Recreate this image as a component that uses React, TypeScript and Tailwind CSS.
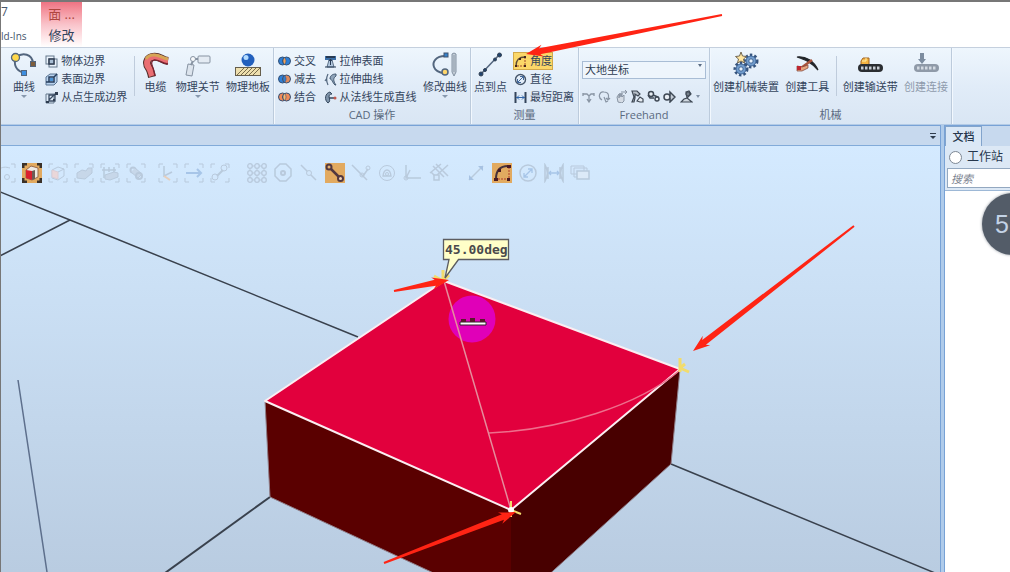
import type { ReactNode } from "react";

const FONT = "font-['Open_Sans','Noto_Sans_CJK_SC',sans-serif]";

function Svg({ w, h, children }: { w: number; h: number; children: ReactNode }) {
  return (
    <svg width={w} height={h} viewBox={`0 0 ${w} ${h}`} fill="none" aria-hidden="true" className="shrink-0">
      {children}
    </svg>
  );
}

/* ---------- ribbon icons ---------- */

const CurveIcon = () => (
  <Svg w={28} h={26}>
    <path d="M6 5C13 0 22 2 23 11M5 8c-1 7 3 12 10 13" stroke="#53667e" strokeWidth="2" />
    <circle cx="5.500" cy="5.500" r="4" fill="#ffd84a" stroke="#53667e" strokeWidth="1.300" />
    <rect x="20.500" y="9.500" width="5" height="5" fill="#7d5e3d" stroke="#53667e" />
    <rect x="11.500" y="18.500" width="5" height="5" fill="#3d8ee0" stroke="#53667e" />
  </Svg>
);

const CableIcon = () => (
  <Svg w={28} h={26}>
    <path d="M26 9C19 8 17 3 10 5 4 7 4 12 7 16c2 3 2 5 3 9" stroke="#54302c" strokeWidth="8" />
    <path d="M26 9C19 8 17 3 10 5 4 7 4 12 7 16c2 3 2 5 3 8" stroke="#ea6e72" strokeWidth="6" />
    <path d="M26 7C19 6 17 2 11 3 8 3 6 4 4 7" stroke="#d6a556" strokeWidth="3" />
    <path d="M26 12C19 11 16 7 12 8c-4 2-2 5-1 8l2 8" stroke="#7b2230" strokeWidth="1.300" />
  </Svg>
);

const JointIcon = () => (
  <Svg w={28} h={26}>
    <rect x="14" y="4" width="12" height="7" rx="1" fill="#e4ebf3" stroke="#8793a2" />
    <path d="M4 12l6 1-2 11-6-1z" fill="#dce4ed" stroke="#8793a2" />
    <path d="M7 13l3-6h4" stroke="#8793a2" strokeWidth="2" />
    <circle cx="9" cy="7" r="2.500" fill="#f8fafc" stroke="#8793a2" />
  </Svg>
);

const FloorIcon = () => (
  <Svg w={28} h={26}>
    <circle cx="14" cy="8" r="6.500" fill="#2360bd" />
    <circle cx="12" cy="5.500" r="2.500" fill="#b4dcff" />
    <rect x="1.500" y="15.500" width="25" height="8" fill="#eedfae" stroke="#665e4c" />
    <path d="M3 23l7-7M7 23l7-7M11 23l7-7M15 23l7-7M19 23l7-7" stroke="#776b4c" />
  </Svg>
);

const BodyEdgeIcon = () => (
  <Svg w={13} h={13}>
    <rect x="1" y="1" width="8" height="8" stroke="#65788c" />
    <rect x="4" y="4" width="8" height="8" stroke="#65788c" />
    <rect x="4" y="4" width="5" height="5" fill="#a9bfd5" stroke="#2f3d50" strokeWidth="1.500" />
  </Svg>
);

const FaceEdgeIcon = () => (
  <Svg w={13} h={13}>
    <path d="M1 4l4-3h7v8l-3 3H1z" fill="#b8d2ee" stroke="#587391" />
    <path d="M4 4h5v5H4zM9 4l3-3M1 9h3" stroke="#253d5c" strokeWidth="1.500" />
    <path d="M5 5h3v3H5z" fill="#4b92d5" />
  </Svg>
);

const PointsEdgeIcon = () => (
  <Svg w={13} h={13}>
    <path d="M1 3h8v9H1z" stroke="#65788c" />
    <path d="M4 9l5-5 2-2M4 4v6h6V4z" stroke="#3c4e65" strokeWidth="1.300" />
    <path d="M1 10h3v2H1zM10 1h3v3h-3zM8 8h2v2H8z" fill="#2f3d50" />
  </Svg>
);

function BooleanIcon({ left, right, mid }: { left: string; right: string; mid: string }) {
  return (
    <Svg w={13} h={11}>
      <circle cx="4.500" cy="5" r="4" fill={left} stroke="#345074" />
      <circle cx="8.500" cy="5" r="4" fill={right} stroke="#345074" />
      <path d="M6.500 1.500c2 2 2 5 0 7c-2-2-2-5 0-7z" fill={mid} stroke="#345074" strokeWidth=".6" />
    </Svg>
  );
}

const ExtrudeFaceIcon = () => (
  <Svg w={13} h={13}>
    <path d="M1 1h11v4H1z" fill="#3a6ea7" />
    <path d="M2 2h9" stroke="#263a54" strokeWidth="2" />
    <path d="M3 12l2-7h3l2 7z" fill="#b4c9e0" stroke="#5c7188" />
    <path d="M6.500 10V4M5 6l1.500-2L8 6M1 12h11" stroke="#263a54" />
  </Svg>
);

const ExtrudeCurveIcon = () => (
  <Svg w={13} h={13}>
    <path d="M4 1c-2 4-2 7 0 11M1 8l2-3" stroke="#53677e" strokeWidth="1.200" />
    <path d="M12 1C8 1 6 3 6 6c2 0 2 3 5 6h1C9 8 9 5 12 3z" fill="#8fa4ba" stroke="#445a72" />
  </Svg>
);

const NormalLineIcon = () => (
  <Svg w={13} h={13}>
    <path d="M6 1C1 2 0 9 4 12c2-1 2-3 1-6 0-2 1-3 3-3z" fill="#7f94aa" stroke="#36495f" />
    <path d="M5 7h6" stroke="#36495f" strokeWidth="1.500" />
    <circle cx="11" cy="7" r="1.500" fill="#c05a50" />
  </Svg>
);

const EditCurveIcon = () => (
  <Svg w={28} h={26}>
    <path d="M14 4C5 4 1 10 3 15c1 3 5 6 10 6" stroke="#53667e" strokeWidth="2" />
    <rect x="13" y="1" width="4" height="4" fill="#3681ca" stroke="#40536c" />
    <circle cx="14" cy="20" r="3" fill="#ffd66b" stroke="#53667e" strokeWidth="1.500" />
    <path d="M21 2q2-2 4 0v18l-2 4-2-4z" fill="#c4ced8" stroke="#8492a2" />
    <path d="M23 3v17" stroke="#8b99a8" />
  </Svg>
);

const PointToPointIcon = () => (
  <Svg w={28} h={26}>
    <path d="M4 22L22 3" stroke="#53667e" strokeWidth="1.500" />
    <g fill="#21446f" stroke="#334154">
      <circle cx="4" cy="22" r="2" />
      <circle cx="8" cy="18" r="1.500" />
      <circle cx="18" cy="7.500" r="1.500" />
      <circle cx="22.500" cy="3" r="2" />
    </g>
  </Svg>
);

const AngleIcon = () => (
  <Svg w={13} h={13}>
    <path d="M2 11C2 5 5 2 11 2" stroke="#5d4a35" strokeWidth="1.300" />
    <path d="M11 2v9H2" stroke="#a34a2c" strokeDasharray="2 1" />
    <path d="M10 1h2v2h-2zM1 10h2v2H1zM10 10h2v2h-2zM5 3h2v2H5z" fill="#42261e" />
  </Svg>
);

const DiameterIcon = () => (
  <Svg w={13} h={13}>
    <circle cx="6.500" cy="6.500" r="5" stroke="#46566a" strokeWidth="1.400" />
    <path d="M3.500 9.500l6-6M6 3.500h3.500V7M3.500 6v3.500H7" stroke="#426799" />
  </Svg>
);

const DistanceIcon = () => (
  <Svg w={13} h={13}>
    <path d="M1.500 1v11M11.500 1v11" stroke="#34445a" strokeWidth="2" />
    <path d="M2 6.500h9M5 4.500l-2 2 2 2M8 4.500l2 2-2 2" stroke="#3266a8" />
  </Svg>
);

function Gear({ x, y, r }: { x: number; y: number; r: number }) {
  return (
    <g transform={`translate(${x} ${y})`}>
      <circle r={r} stroke="#36547d" strokeWidth="3" strokeDasharray="2.400 2" />
      <circle r={r - 1} fill="#729dcd" stroke="#3e6597" />
      <circle r="2.200" fill="#e9f3fc" stroke="#3e6597" />
    </g>
  );
}

const MechanismIcon = () => (
  <Svg w={28} h={26}>
    <Gear x={19} y={9} r={6} />
    <Gear x={9} y={17} r={6} />
    <path d="M9 0l1.500 4 4 .5-3 2.500 1 4L9 9l-3.500 2 1-4-3-2.500 4-.5z" fill="#ffe6a1" stroke="#716651" />
  </Svg>
);

const ToolIcon = () => (
  <Svg w={28} h={26}>
    <path d="M4 5C13 4 21 9 25 18 18 10 13 8 4 5z" fill="#1f2227" stroke="#25282c" strokeWidth="1.200" />
    <path d="M19 8L8 16" stroke="#a8543d" strokeWidth="2.500" />
    <path d="M4 14l5 1 6-2v3l-6 3H4z" fill="#e4a37d" stroke="#7e3c31" strokeWidth=".7" />
    <path d="M4 14h4v4H4z" fill="#be2630" />
  </Svg>
);

const ConveyorIcon = () => (
  <Svg w={28} h={26}>
    <path d="M5 9l2-3h6v8H5z" fill="#f6b441" stroke="#a36623" />
    <path d="M6 9h4V6" stroke="#fff0ab" />
    <rect x="2" y="12" width="25" height="8" rx="4" fill="#2a2d31" />
    <path d="M5 16h19" stroke="#c8cdd3" strokeWidth="3" strokeDasharray="2.500 1.500" />
  </Svg>
);

const ConnectionIcon = () => (
  <Svg w={28} h={26}>
    <rect x="2" y="12" width="25" height="8" rx="4" fill="#8f9aa8" />
    <path d="M5 16h19" stroke="#d3dae2" strokeWidth="3" strokeDasharray="2.500 1.500" />
    <path d="M8 1h4v6h2l-4 5-4-5h2z" fill="#7d8da0" />
  </Svg>
);

const freehand: { name: string; icon: ReactNode }[] = [
  {
    name: "Move",
    icon: <path d="M1 4h4l2 2 2-2h3M1 3v3M12 3v3M7 6v5M5 9l2 3 2-3" stroke="#8995a4" strokeWidth="1.300" />,
  },
  {
    name: "Rotate",
    icon: <path d="M4 10C-1 7 2 1 6 2c5 0 5 4 4 7M10 10L8 8M10 10l2-2M6 7l2 5 2-1" stroke="#8995a4" strokeWidth="1.200" />,
  },
  {
    name: "Drag",
    icon: <path d="M3 12L2 7l2-3v4l1-5 1 4 1-4v4l2-2v6l-2 2zM6 2h6M10 0l2 2-2 2" fill="#d5dce5" stroke="#8995a4" />,
  },
  {
    name: "Jog joint",
    icon: (
      <g stroke="#3f4955" strokeWidth="1.200">
        <path d="M1 1h5l3 3-2 2-3-2v4l-1 4H1l2-5z" fill="#b8c1ca" />
        <path d="M6 11l3-4 3 2v3H9z" fill="#e8edf3" />
      </g>
    ),
  },
  {
    name: "Jog linear",
    icon: (
      <g stroke="#3f4955" strokeWidth="1.500">
        <circle cx="4" cy="4" r="2.500" fill="#e8edf3" />
        <path d="M6 5l5 2v3M1 5l2 3h4" />
        <circle cx="10" cy="9" r="2" fill="#e8edf3" />
      </g>
    ),
  },
  {
    name: "Jog reorient",
    icon: (
      <g stroke="#3f4955" strokeWidth="1.500">
        <path d="M5 5h2V2l5 5-5 5V9H5z" fill="#c3ccd6" />
        <circle cx="4" cy="7" r="3" fill="#e8edf3" />
      </g>
    ),
  },
  {
    name: "Multiple robot jog",
    icon: (
      <g stroke="#3f4955" strokeWidth="1.200">
        <path d="M6 2l3-1 2 3-4 4 5 4H1l3-3 3-1z" fill="#d0d8e0" />
        <circle cx="8" cy="4" r="2" fill="#76818c" />
      </g>
    ),
  },
];

/* ---------- ribbon parts ---------- */

function BigButton({ icon, label, menu, muted }: { icon: ReactNode; label: string; menu?: boolean; muted?: boolean }) {
  return (
    <button
      type="button"
      className={`flex shrink-0 flex-col items-center text-[11px] leading-[14px] whitespace-nowrap ${muted ? "text-[#8e9aab]" : "text-[#33445c]"}`}
    >
      <span className="mb-[2px] flex h-[26px]">{icon}</span>
      <span>{label}</span>
      {menu && <span className="mt-px border-x-[3px] border-t-[3px] border-x-transparent border-t-[#8798ad]" />}
    </button>
  );
}

function SmallButton({ icon, label, active }: { icon: ReactNode; label: string; active?: boolean }) {
  return (
    <button
      type="button"
      className={`flex h-[18px] items-center gap-[3px] px-px text-[11px] leading-[14px] whitespace-nowrap text-[#33445c] ${
        active ? "bg-[#fbd768] outline outline-1 -outline-offset-1 outline-[#d2a84a]" : ""
      }`}
    >
      {icon}
      {label}
    </button>
  );
}

function Group({ label, className, children }: { label: string; className: string; children: ReactNode }) {
  return (
    <section className={`flex shrink-0 flex-col border-r border-[#bccbdc] shadow-[1px_0_0_#f2f8fe] ${className}`}>
      <div className="flex flex-1 items-start justify-between px-[3px] pt-1">{children}</div>
      <h2 className="h-4 text-center text-[11px] leading-[14px] text-[#5a6a80]">{label}</h2>
    </section>
  );
}

const Divider = () => <span className="mt-1 h-10 w-px bg-[#bfccdc]" />;

function Ribbon() {
  return (
    <div className="flex h-[77px] shrink-0 overflow-hidden border-t border-[#c5d0de] bg-linear-to-b from-[#eef6fd] via-[#e1ecf8] to-[#d9e6f4]">
      <Group label="" className="w-[273px] pl-[6px]">
        <BigButton icon={<CurveIcon />} label="曲线" menu />
        <div className="flex flex-col items-start">
          <SmallButton icon={<BodyEdgeIcon />} label="物体边界" />
          <SmallButton icon={<FaceEdgeIcon />} label="表面边界" />
          <SmallButton icon={<PointsEdgeIcon />} label="从点生成边界" />
        </div>
        <Divider />
        <BigButton icon={<CableIcon />} label="电缆" />
        <BigButton icon={<JointIcon />} label="物理关节" menu />
        <BigButton icon={<FloorIcon />} label="物理地板" />
      </Group>
      <Group label="CAD 操作" className="w-[197px]">
        <div className="flex flex-col items-start">
          <SmallButton icon={<BooleanIcon left="#2f7fd6" right="#2f7fd6" mid="#f4a259" />} label="交叉" />
          <SmallButton icon={<BooleanIcon left="#2f7fd6" right="#e08a5c" mid="#2f7fd6" />} label="减去" />
          <SmallButton icon={<BooleanIcon left="#f08a5a" right="#f08a5a" mid="#f7bb74" />} label="结合" />
        </div>
        <div className="flex flex-col items-start">
          <SmallButton icon={<ExtrudeFaceIcon />} label="拉伸表面" />
          <SmallButton icon={<ExtrudeCurveIcon />} label="拉伸曲线" />
          <SmallButton icon={<NormalLineIcon />} label="从法线生成直线" />
        </div>
        <BigButton icon={<EditCurveIcon />} label="修改曲线" menu />
      </Group>
      <Group label="测量" className="w-[108px]">
        <BigButton icon={<PointToPointIcon />} label="点到点" />
        <div className="flex flex-col items-start">
          <SmallButton icon={<AngleIcon />} label="角度" active />
          <SmallButton icon={<DiameterIcon />} label="直径" />
          <SmallButton icon={<DistanceIcon />} label="最短距离" />
        </div>
      </Group>
      <Group label="Freehand" className="w-[131px]">
        <div className="flex w-full flex-col gap-[10px] pt-1">
          <div className="relative">
            <select
              aria-label="坐标系"
              className="h-[18px] w-full appearance-none border border-[#a9bdd5] bg-[#eef5fc] px-[2px] text-[11px] leading-[14px] text-[#2d3b50]"
            >
              <option>大地坐标</option>
            </select>
            <span className="pointer-events-none absolute top-2 right-1 border-x-2 border-t-[3px] border-x-transparent border-t-[#5a6c84]" />
          </div>
          <div className="flex items-center justify-between pr-[6px]">
            {freehand.map((f) => (
              <button key={f.name} type="button" aria-label={f.name}>
                <Svg w={13} h={13}>{f.icon}</Svg>
              </button>
            ))}
            <span className="border-x-2 border-t-[3px] border-x-transparent border-t-[#8090a4]" />
          </div>
        </div>
      </Group>
      <Group label="机械" className="w-[242px]">
        <BigButton icon={<MechanismIcon />} label="创建机械装置" />
        <BigButton icon={<ToolIcon />} label="创建工具" />
        <Divider />
        <BigButton icon={<ConveyorIcon />} label="创建输送带" />
        <BigButton icon={<ConnectionIcon />} label="创建连接" muted />
      </Group>
    </div>
  );
}

/* ---------- view toolbar ---------- */

const FRAME = "M1 5V1h4M15 1h4v4M19 15v4h-4M5 19H1v-4";

type Tool = { name: string; icon: ReactNode; active?: boolean };

const toolGroups: Tool[][] = [
  [
    { name: "选择曲线", icon: <><path d={FRAME} /><path d="M1 8c5-5 9-4 13-3" /><circle cx="11" cy="14" r="2.500" /></> },
    {
      name: "选择表面",
      active: true,
      icon: (
        <>
          <path d={FRAME} stroke="#3b3128" strokeWidth="3" />
          <path d="M4 7l5-4 7 2v9l-6 3-6-2z" fill="#efe9e2" stroke="#9b6a4a" />
          <path d="M4 7l6 1v9l-6-2z" fill="#d9202f" stroke="none" />
          <path d="M10 8l3-1v9l-3 1z" fill="#6e5c54" stroke="none" />
        </>
      ),
    },
    { name: "选择物体", icon: <><path d={FRAME} /><path d="M4 7l6-3 6 2v7l-6 4-6-2zM10 9l6-3" /><path d="M4 7l6 2v7l-6-2z" fill="#f0d3d1" stroke="#dfc8cc" /></> },
    { name: "选择部件", icon: <><path d={FRAME} /><path d="M3 10l5-3 4 1 2-3h4v5l-7 6-8-1z" fill="#c5d4e5" /></> },
    { name: "选择组", icon: <><path d={FRAME} /><path d="M4 4v11M9 4v5M14 4v5M2 7h14" strokeWidth="1.500" /><path d="M5 12l9-3 4 1v4l-8 3-5-1z" fill="#c5d4e5" /></> },
    { name: "选择机械装置", icon: <><path d={FRAME} /><circle cx="7" cy="7" r="2.500" strokeWidth="2" /><path d="M5 9l7 6 4-4-7-6" fill="#c5d4e5" /><circle cx="13" cy="13" r="3" strokeWidth="2" /></> },
  ],
  [
    { name: "选择框架", icon: <><path d={FRAME} /><path d="M6 3v10l8-4" strokeWidth="1.500" /><path d="M6 13l6 4" stroke="#ebc9ac" strokeWidth="2" /></> },
    { name: "选择路径", icon: <><path d={FRAME} /><path d="M2 10h15M13 6l4 4-4 4" stroke="#9dbde3" strokeWidth="2" /></> },
    { name: "选择目标点", icon: <><path d={FRAME} /><path d="M7 13l6-6" strokeWidth="2" /><circle cx="5" cy="14" r="3" /><circle cx="14" cy="5" r="3" /></> },
  ],
  [
    {
      name: "捕捉对象",
      icon: (
        <>
          <path d="M3 3h14v14H3zM3 10h14M10 3v14" />
          {[3, 10, 17].flatMap((x) => [3, 10, 17].map((y) => <circle key={`${x}-${y}`} cx={x} cy={y} r="2.300" fill="#d3e7fc" strokeWidth="1.300" />))}
        </>
      ),
    },
    { name: "捕捉中心", icon: <><path d="M7 1h6l5 5v7l-5 5H7l-5-5V6z" strokeWidth="1.500" /><circle cx="10" cy="10" r="2" strokeWidth="2" /></> },
    { name: "捕捉中点", icon: <><path d="M2 2l15 15" strokeWidth="1.500" /><circle cx="10" cy="10" r="2.500" fill="#d3e7fc" /></> },
    {
      name: "捕捉末端",
      active: true,
      icon: <g stroke="#523840" strokeWidth="2"><path d="M4 4l12 12" strokeWidth="2.500" /><circle cx="4" cy="4" r="2.500" fill="#e6b271" /><circle cx="15.500" cy="15.500" r="2.500" fill="#f4d4b4" /></g>,
    },
    { name: "捕捉边缘", icon: <><path d="M1 2l11 11 5-7M12 13l4 4" strokeWidth="1.500" /><circle cx="17" cy="5" r="2" /><circle cx="11" cy="12" r="2" /></> },
    { name: "捕捉重心", icon: <><circle cx="10" cy="10" r="7.500" /><path d="M6 13c1-8 7-8 8 0z" strokeWidth="1.300" /><circle cx="10" cy="11" r="1.500" /></> },
    { name: "捕捉原点", icon: <><path d="M3 2v13h15M3 15l4-8" strokeWidth="1.500" /><circle cx="3" cy="15" r="2" /></> },
    { name: "捕捉网格", icon: <><path d="M1 10L12 1M7 1l12 12M19 2L8 12M2 9l5 5M4 3l11 11" strokeWidth="1.500" /><path d="M5 12h5v5H5z" fill="#d3e7fc" strokeWidth="1.500" /></> },
  ],
  [
    { name: "点到点", icon: <><path d="M3 17L17 3" strokeWidth="1.500" /><path d="M12 3h5v5zM3 12v5h5z" fill="#9db9dc" stroke="none" /></> },
    {
      name: "角度",
      active: true,
      icon: (
        <>
          <path d="M4 16C4 8 8 3 16 3" stroke="#46313a" strokeWidth="2" />
          <path d="M17 4v12H4" stroke="#b03c2c" strokeDasharray="2 1" />
          <path d="M15 2h4v3h-4zM2 15h4v3H2zM15 15h3v3h-3zM6 6h3v3H6z" fill="#4a1b24" stroke="none" />
        </>
      ),
    },
    { name: "直径", icon: <><circle cx="10" cy="10" r="8" strokeWidth="1.500" /><path d="M6 14l8-8M10 6h4v4M6 10v4h4" stroke="#9dbde3" strokeWidth="1.300" /></> },
    { name: "最短距离", icon: <><path d="M1 2c3 5 3 11 0 16zM19 2c-3 5-3 11 0 16zM4 4v12M16 4v12" strokeWidth="1.500" /><path d="M5 10h10M7 8l-2 2 2 2M13 8l2 2-2 2" stroke="#9dbde3" strokeWidth="1.300" /></> },
    { name: "跟踪移动对象", icon: <><path d="M1 3h13v8H1zM4 5h13v9H4z" fill="#d3e7fc" /><path d="M7 8h12v8H7z" fill="#dfebf7" strokeWidth="1.500" /></> },
  ],
];

function ViewToolbar() {
  return (
    <div role="toolbar" className="relative -ml-[5px] flex gap-[17px] pt-[17px]">
      {toolGroups.map((tools, i) => (
        <div key={i} className={`flex gap-[6px] ${i === 1 ? "-ml-[5px]" : ""}`}>
          {tools.map((t) => (
            <button key={t.name} type="button" aria-label={t.name} className={`size-5 shrink-0 ${t.active ? "bg-[#e2aa60]" : "opacity-80"}`}>
              <svg width="20" height="20" viewBox="0 0 20 20" fill="none" stroke="#b3c3d5">
                {t.icon}
              </svg>
            </button>
          ))}
        </div>
      ))}
    </div>
  );
}

/* ---------- 3D scene, drawn from the top left of the view ---------- */

function Scene() {
  return (
    <svg className="absolute top-0 left-0" width="1600" height="1000" viewBox="1 146 1600 1000" fill="none" aria-label="3D view">
      <g stroke="#39414d" strokeWidth="1.500">
        <path d="M-2 191L70 220L358 337M70 220L-2 257" />
        <path d="M270 497L165 573L60 649" strokeWidth="2" />
        <path d="M671 464L935 573L1200 682" />
        <path d="M18 380L47 572L59 650" stroke="#5d6f8c" />
      </g>
      <path d="M265 401L511 510V609L270 497z" fill="#5a0000" />
      <path d="M511 510L680 369L671 464L511 609z" fill="#480000" />
      <path d="M265 401L270 497L511 609L671 464L680 369" stroke="#8f7d87" />
      <path d="M444 281L680 369L511 510L265 401z" fill="#e2003d" stroke="#fbeef2" strokeWidth="2" strokeLinejoin="round" />
      <circle cx="472" cy="319" r="23.500" fill="#e000b8" />
      <path d="M444 281L511 510" stroke="#e58d9c" strokeWidth="1.500" />
      <path d="M680 370C640 405 560 430 489 433" stroke="#ed6f8c" strokeWidth="1.500" />
      <path d="M460 322h26v3h-26z" fill="#fff" stroke="#30202c" />
      <path d="M461 319h5v3h-5zM470 318h5v4h-5zM480 319h5v3h-5z" fill="#59192d" />
      <g stroke="#f2dc6c" strokeWidth="3">
        <path d="M443 270v10M434 276l9 5M443 280l6-5" />
        <path d="M680 358v14M680 368l9 4M680 368l5-4" />
        <path d="M511 501v16M511 510l10 4" strokeWidth="2" />
      </g>
      <circle cx="511" cy="510" r="3" fill="#fff" />
      <path d="M443.500 239.500h65v20h-50L445 278l4-18.500h-5.500z" fill="#ffffc8" stroke="#5c5c60" strokeWidth="1.300" />
      <text x="445" y="254" fill="#4a4a4c" className="font-['DejaVu_Sans_Mono',monospace] text-[13px] font-bold">
        45.00deg
      </text>
    </svg>
  );
}

/* ---------- red annotation arrows ---------- */

const arrows = [
  { tail: [722, 15], tip: [526, 54] },
  { tail: [854, 226], tip: [693, 351] },
  { tail: [394, 291], tip: [449, 280] },
  { tail: [384, 563], tip: [516, 512] },
];

function arrowPath(tail: number[], tip: number[]) {
  const dx = tip[0] - tail[0];
  const dy = tip[1] - tail[1];
  const len = Math.hypot(dx, dy);
  const at = (back: number, side: number) =>
    `${tip[0] - (dx / len) * back - (dy / len) * side} ${tip[1] - (dy / len) * back + (dx / len) * side}`;
  return `M${at(0, 0)}L${at(17, 6)}L${at(14, 3)}L${at(len, 1)}L${at(len, -1)}L${at(14, -3)}L${at(17, -6)}z`;
}

function Annotations() {
  return (
    <svg className="pointer-events-none absolute top-0 left-0" width="1010" height="572" viewBox="0 0 1010 572" aria-hidden="true">
      {arrows.map((a, i) => (
        <path key={i} d={arrowPath(a.tail, a.tip)} fill="#ff2414" />
      ))}
    </svg>
  );
}

/* ---------- page ---------- */

export default function App() {
  return (
    <div className={`relative flex h-screen w-full flex-col overflow-hidden border-t-2 border-l border-[#777] bg-white ${FONT}`}>
      <header className="flex h-[45px] shrink-0">
        <div className="flex w-10 flex-col text-[#46566c]">
          <span className="text-[12px] leading-5">7</span>
          <a href="#addins" className="pt-1 text-[10px] leading-5 whitespace-nowrap">
            ld-Ins
          </a>
        </div>
        <div className="flex w-[41px] flex-col items-center bg-linear-to-b from-[#ee7383] via-[#f9c3ca] via-50% to-white">
          <span className="pt-[2px] text-[13px] leading-5 whitespace-nowrap text-[#b0453f]">面 ...</span>
          <a href="#modify" className="text-[13px] leading-[22px] text-[#33445c]">
            修改
          </a>
        </div>
      </header>

      <Ribbon />

      <div className="flex min-h-0 flex-1 gap-[3px] border-t border-[#b3cbe6] bg-[#afcbea]">
        <main className="flex min-w-0 flex-1 flex-col border-t border-r border-[#78a2d6]">
          <div className="flex h-5 shrink-0 items-center justify-end border-b border-[#82abd9] bg-[#c7d9ee] pr-1">
            <button type="button" aria-label="窗口列表" className="flex flex-col items-center gap-[2px]">
              <span className="h-px w-[6px] bg-[#303c4c]" />
              <span className="border-x-[3px] border-t-[3px] border-x-transparent border-t-[#303c4c]" />
            </button>
          </div>
          <div className="relative flex-1 overflow-hidden bg-linear-to-b from-[#d4eaff] to-[#b9cce1]">
            <Scene />
            <ViewToolbar />
          </div>
        </main>

        <aside className="flex w-[66px] shrink-0 flex-col overflow-hidden border-t border-l border-[#78a2d6] bg-white">
          <div className="flex h-5 shrink-0 bg-[#c7d9ee]">
            <button type="button" className="w-[37px] border border-b-0 border-[#82a4cc] bg-[#dbe8f6] text-[11px] leading-4 font-medium text-[#26364c]">
              文档
            </button>
          </div>
          <div className="flex h-[45px] shrink-0 flex-col border-b border-[#9db8d6] bg-[#dce8f5] pl-[2px]">
            <label className="flex h-[22px] shrink-0 items-center gap-[5px] pl-[2px] text-[12px] leading-4 whitespace-nowrap text-[#26364c]">
              <input type="radio" name="scope" className="size-[13px] shrink-0 appearance-none rounded-full border border-[#7d8794] bg-white" />
              工作站
            </label>
            <input
              type="text"
              aria-label="搜索"
              placeholder="搜索"
              className="h-5 w-24 border border-[#93a8c0] bg-white px-[3px] text-[11px] italic leading-4 placeholder:text-[#7c8490]"
            />
          </div>
        </aside>
      </div>

      <div className="absolute top-[191px] -right-[34px] size-[62px] rounded-full bg-[#535c68] pl-[13px] font-['Liberation_Sans',sans-serif] text-[25px] leading-[62px] text-[#c3d3e6] shadow-[0_0_3px_#8b929b]">
        5
      </div>
      <div className="pointer-events-none absolute -top-[2px] -left-px">
        <Annotations />
      </div>
    </div>
  );
}
